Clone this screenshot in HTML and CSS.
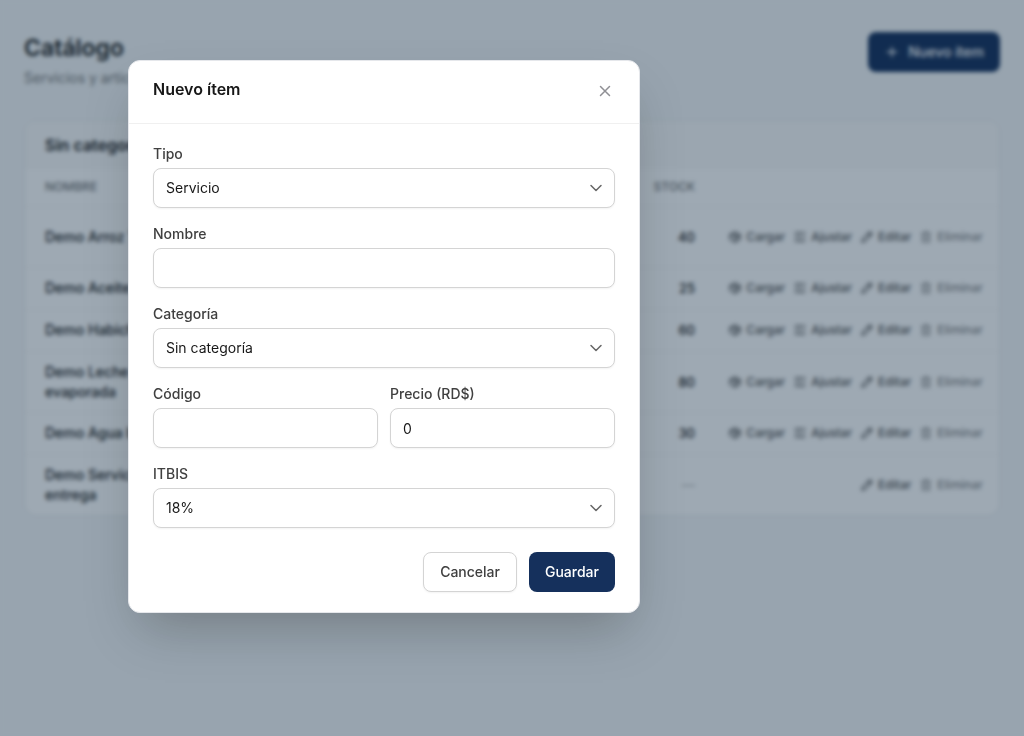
FILE: index.html
```html
<!DOCTYPE html>
<html lang="es">
<head>
<meta charset="utf-8">
<meta name="viewport" content="width=device-width, initial-scale=1">
<title>Catálogo</title>
<link rel="stylesheet" href="styles.css">
</head>
<body>
<svg class="sprite" aria-hidden="true">
  <symbol id="box" viewBox="0 0 24 24"><path d="M21 8 12 3 3 8v8l9 5 9-5zM3 8l9 5 9-5M12 13v8M7.500 5.500l9 5v4"/></symbol>
  <symbol id="sliders" viewBox="0 0 24 24"><path d="M3 5h7M15 5h6M3 12h3M11 12h10M3 19h9M17 19h4M12 3v4M8 10v4M14 17v4"/></symbol>
  <symbol id="pencil" viewBox="0 0 24 24"><path d="M3 21l1-5L17 3l4 4L8 20zM14 6l4 4"/></symbol>
  <symbol id="trash" viewBox="0 0 24 24"><path d="M4 6h16M9 6V3h6v3M6 6v15h12V6M10 10v7M14 10v7"/></symbol>
  <symbol id="chevron" viewBox="0 0 16 16"><path d="M3 5.500 8 10.500 13 5.500"/></symbol>
</svg>

<main class="page">
  <header class="page-head">
    <div>
      <h1 class="page-title">Catálogo</h1>
      <p class="page-sub">Servicios y artículos</p>
    </div>
    <button class="btn btn-primary btn-new" type="button">
      <svg class="icon" viewBox="0 0 24 24" aria-hidden="true"><path d="M12 5v14M5 12h14"/></svg>
      Nuevo ítem
    </button>
  </header>

  <section class="card">
    <h2 class="card-title">Sin categoría</h2>
    <table class="items">
      <thead>
        <tr><th class="name">Nombre</th><th class="stock">Stock</th><th class="acts"></th></tr>
      </thead>
      <tbody>
        <tr class="tall"><td class="name">Demo Arroz T</td><td class="stock">40</td><td class="acts"><div class="actions">
          <button type="button"><svg class="icon"><use href="#box"/></svg>Cargar</button><button type="button"><svg class="icon"><use href="#sliders"/></svg>Ajustar</button><button type="button"><svg class="icon"><use href="#pencil"/></svg>Editar</button><button type="button" class="muted"><svg class="icon"><use href="#trash"/></svg>Eliminar</button></div></td></tr>
        <tr><td class="name">Demo Aceite</td><td class="stock">25</td><td class="acts"><div class="actions">
          <button type="button"><svg class="icon"><use href="#box"/></svg>Cargar</button><button type="button"><svg class="icon"><use href="#sliders"/></svg>Ajustar</button><button type="button"><svg class="icon"><use href="#pencil"/></svg>Editar</button><button type="button" class="muted"><svg class="icon"><use href="#trash"/></svg>Eliminar</button></div></td></tr>
        <tr><td class="name">Demo Habich.</td><td class="stock">60</td><td class="acts"><div class="actions">
          <button type="button"><svg class="icon"><use href="#box"/></svg>Cargar</button><button type="button"><svg class="icon"><use href="#sliders"/></svg>Ajustar</button><button type="button"><svg class="icon"><use href="#pencil"/></svg>Editar</button><button type="button" class="muted"><svg class="icon"><use href="#trash"/></svg>Eliminar</button></div></td></tr>
        <tr class="tall"><td class="name">Demo Leche evaporada</td><td class="stock">80</td><td class="acts"><div class="actions">
          <button type="button"><svg class="icon"><use href="#box"/></svg>Cargar</button><button type="button"><svg class="icon"><use href="#sliders"/></svg>Ajustar</button><button type="button"><svg class="icon"><use href="#pencil"/></svg>Editar</button><button type="button" class="muted"><svg class="icon"><use href="#trash"/></svg>Eliminar</button></div></td></tr>
        <tr><td class="name">Demo Agua b</td><td class="stock">30</td><td class="acts"><div class="actions">
          <button type="button"><svg class="icon"><use href="#box"/></svg>Cargar</button><button type="button"><svg class="icon"><use href="#sliders"/></svg>Ajustar</button><button type="button"><svg class="icon"><use href="#pencil"/></svg>Editar</button><button type="button" class="muted"><svg class="icon"><use href="#trash"/></svg>Eliminar</button></div></td></tr>
        <tr class="tall"><td class="name">Demo Servicio entrega</td><td class="stock none">—</td><td class="acts"><div class="actions">
          <button type="button"><svg class="icon"><use href="#pencil"/></svg>Editar</button><button type="button" class="muted"><svg class="icon"><use href="#trash"/></svg>Eliminar</button></div></td></tr>
      </tbody>
    </table>
  </section>
</main>

<div class="overlay">
  <div class="modal" role="dialog" aria-modal="true" aria-labelledby="modal-title">
    <header class="modal-head">
      <h2 class="modal-title" id="modal-title">Nuevo ítem</h2>
      <button class="close" type="button" aria-label="Cerrar">
        <svg viewBox="0 0 16 16" aria-hidden="true"><path d="M3.500 3.500l9 9M12.500 3.500l-9 9"/></svg>
      </button>
    </header>
    <form class="form">
      <div class="field">
        <label for="tipo">Tipo</label>
        <div class="select"><select id="tipo"><option>Servicio</option></select><svg aria-hidden="true"><use href="#chevron"/></svg></div>
      </div>
      <div class="field">
        <label for="nombre">Nombre</label>
        <input id="nombre" type="text">
      </div>
      <div class="field">
        <label for="categoria">Categoría</label>
        <div class="select"><select id="categoria"><option>Sin categoría</option></select><svg aria-hidden="true"><use href="#chevron"/></svg></div>
      </div>
      <div class="pair">
        <div class="field">
          <label for="codigo">Código</label>
          <input id="codigo" type="text">
        </div>
        <div class="field">
          <label for="precio">Precio (RD$)</label>
          <input id="precio" type="text" inputmode="decimal" value="0">
        </div>
      </div>
      <div class="field">
        <label for="itbis">ITBIS</label>
        <div class="select"><select id="itbis"><option>18%</option></select><svg aria-hidden="true"><use href="#chevron"/></svg></div>
      </div>
      <div class="form-foot">
        <button class="btn btn-plain" type="button">Cancelar</button>
        <button class="btn btn-primary" type="submit">Guardar</button>
      </div>
    </form>
  </div>
</div>
</body>
</html>
```
FILE: styles.css
```css
*, *::before, *::after { box-sizing: border-box; }

body {
  margin: 0;
  min-height: 100vh;
  background: #f5f7f8;
  color: #171717;
  font: 14px/20px Inter, "Liberation Sans", sans-serif;
}

h1, h2, p { margin: 0; }
button, input, select { font: inherit; color: inherit; }
svg { fill: none; stroke: currentColor; stroke-linecap: round; stroke-linejoin: round; }
.sprite { display: none; }
.icon { width: 14px; height: 14px; stroke-width: 2; flex: none; }

/* Catalogue page */
.page { padding: 32px 24px; }
.page-head { display: flex; justify-content: space-between; align-items: flex-start; }
.page-title { font-size: 23px; line-height: 32px; font-weight: 600; }
.page-sub { margin-top: 4px; color: #737373; }

.btn {
  display: inline-flex;
  align-items: center;
  justify-content: center;
  height: 40px;
  padding: 0 16px;
  border: 1px solid transparent;
  border-radius: 8px;
  font-weight: 500;
}
.btn-primary { background: #15305c; color: #fff; padding: 0 15px; }
.btn-new { gap: 8px; }
.btn-new .icon { width: 16px; height: 16px; }
.btn-plain { background: #fff; border-color: #d4d4d4; color: #404040; box-shadow: 0 1px 2px rgba(0, 0, 0, .05); }

.card { margin-top: 32px; border: 1px solid #e8eaec; border-radius: 12px; background: #fff; overflow: hidden; }
.card-title { padding: 14px 20px; font-size: 16px; line-height: 20px; font-weight: 600; background: #fafafa; }
.items { width: 100%; border-collapse: collapse; table-layout: fixed; }
.items th {
  height: 37px;
  padding: 0 20px;
  font-size: 12px;
  line-height: 16px;
  font-weight: 500;
  text-align: left;
  text-transform: uppercase;
  color: #737373;
}
.items td { height: 42px; padding: 0 20px; border-top: 1px solid #f5f5f5; font-weight: 500; }
.items .tall td { height: 61px; }
.items .name { width: 160px; }
.items .stock { text-align: right; }
.items td.stock { font-size: 13px; }
.items .acts { width: 284px; padding: 0 16px 0 0; }
.items td.none { color: #a3a3a3; font-weight: 400; }

.actions { display: flex; justify-content: flex-end; gap: 8px; }
.actions button {
  display: inline-flex;
  align-items: center;
  gap: 4px;
  padding: 0;
  border: 0;
  background: none;
  font-size: 12px;
  line-height: 16px;
  font-weight: 500;
  color: #525252;
}
.actions .muted { color: #8a8a8a; }

/* Dialog */
.overlay {
  position: fixed;
  inset: 0;
  display: grid;
  grid-template-columns: 1fr 4fr 3fr;
  align-items: start;
  padding: 60px 0;
  overflow: auto;
  background: rgba(12, 40, 66, .4);
  backdrop-filter: blur(2px);
}
.modal {
  grid-column: 2;
  border: 1px solid #e5e7eb;
  border-radius: 12px;
  background: #fff;
  box-shadow: 0 25px 50px -12px rgba(0, 0, 0, .25);
}
.modal-head {
  display: flex;
  justify-content: space-between;
  align-items: flex-start;
  padding: 16px 20px 18px 24px;
  border-bottom: 1px solid #f0f0f0;
}
.modal-title { font-size: 16px; line-height: 24px; font-weight: 600; }
.close {
  display: grid;
  place-items: center;
  width: 28px;
  height: 28px;
  padding: 0;
  border: 0;
  background: none;
  color: #8f8f94;
}
.close svg { width: 16px; height: 16px; stroke-width: 1.500; }

.form { display: grid; gap: 16px; padding: 20px 24px; }
.field { display: grid; gap: 4px; }
.field label { font-weight: 500; color: #404040; }
.field input, .field select {
  width: 100%;
  height: 40px;
  padding: 0 12px;
  border: 1px solid #d4d4d4;
  border-radius: 8px;
  background: #fff;
  box-shadow: 0 1px 2px rgba(0, 0, 0, .05);
  appearance: none;
}
.select { position: relative; }
.select svg {
  position: absolute;
  top: 12px;
  right: 11px;
  width: 16px;
  height: 16px;
  color: #666;
  stroke-width: 1.500;
  pointer-events: none;
}
.pair { display: grid; grid-template-columns: 1fr 1fr; gap: 12px; }
.form-foot { display: flex; justify-content: flex-end; gap: 12px; padding-top: 8px; }
```
